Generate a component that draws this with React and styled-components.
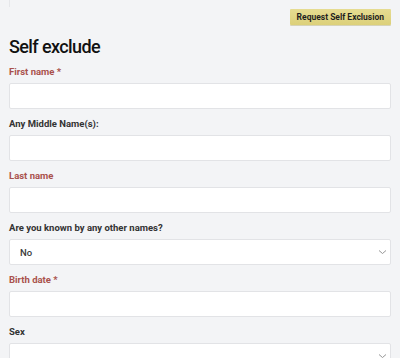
import React, { useState } from 'react';
import styled, { createGlobalStyle } from 'styled-components';

const GlobalStyle = createGlobalStyle`
  html, body {
    margin: 0;
    padding: 0;
    background: #f3f4f6;
  }
  body {
    font-family: Roboto, "Liberation Sans", Arial, sans-serif;
    color: #2b2b2b;
  }
`;

const Page = styled.div`
  padding: 0 9px;
  height: 358px;
  overflow: hidden;
`;

// 위쪽에 잘려서 보이는 패널 테두리 흔적
const PanelEdge = styled.div`
  height: 7px;
  border-left: 1px solid #e6e7ea;
`;

const Toolbar = styled.div`
  display: flex;
  justify-content: flex-end;
  margin-top: 2px;
`;

const ExcludeButton = styled.button`
  height: 16px;
  padding: 0 7px;
  border: none;
  border-radius: 1px;
  background: linear-gradient(#e6dc92, #dcd07a);
  box-shadow: 0 1px 0 rgba(160, 150, 70, 0.35);
  color: #1f1f1f;
  font-family: Roboto, "Liberation Sans", Arial, sans-serif;
  font-size: 8.5px;
  font-weight: 700;
  letter-spacing: 0;
  cursor: pointer;
`;

const Title = styled.h1`
  margin: 11px 0 0;
  font-size: 18px;
  line-height: 22px;
  font-weight: 500;
  color: #111;
  letter-spacing: -0.6px;
`;

const Form = styled.form`
  display: flex;
  flex-direction: column;
  margin-top: -1px;
`;

const Field = styled.div`
  display: flex;
  flex-direction: column;
  margin-top: 9px;
`;

const Label = styled.label`
  font-size: 9.5px;
  line-height: 12px;
  font-weight: 700;
  letter-spacing: 0;
  margin-bottom: 5px;
  color: ${({ required }) => (required ? '#a9514c' : '#333')};
`;

const TextInput = styled.input`
  box-sizing: border-box;
  height: 26px;
  width: 100%;
  border: 1px solid #e2e3e6;
  border-radius: 2px;
  background: #fff;
  padding: 0 10px;
  font-family: inherit;
  font-size: 9.5px;
  outline: none;
`;

const SelectWrap = styled.div`
  position: relative;
  height: 26px;
`;

const Select = styled.select`
  box-sizing: border-box;
  appearance: none;
  height: 26px;
  width: 100%;
  border: 1px solid #e2e3e6;
  border-radius: 2px;
  background: #fff;
  padding: 0 10px;
  font-family: inherit;
  font-size: 9.5px;
  font-weight: 500;
  color: #3a3a3a;
  outline: none;
`;

const Chevron = styled.svg`
  position: absolute;
  right: 4px;
  top: 10px;
  pointer-events: none;
`;

const ChevronIcon = () => (
  <Chevron width="9" height="6" viewBox="0 0 9 6">
    <path d="M1 1.5 L4.5 4.5 L8 1.5" fill="none" stroke="#8a8a8a" strokeWidth="0.9" />
  </Chevron>
);

const fields = [
  { name: 'firstName', label: 'First name *', required: true },
  { name: 'middleName', label: 'Any Middle Name(s):' },
  { name: 'lastName', label: 'Last name', required: true },
  { name: 'otherNames', label: 'Are you known by any other names?', options: ['No', 'Yes'] },
  { name: 'birthDate', label: 'Birth date *', required: true },
  { name: 'sex', label: 'Sex', options: ['', 'Male', 'Female'] },
];

const App = () => {
  const [values, setValues] = useState({ otherNames: 'No', sex: '' });

  const handleChange = (e) => {
    setValues({ ...values, [e.target.name]: e.target.value });
  };

  return (
    <>
      <GlobalStyle />
      <Page>
        <PanelEdge />
        <Toolbar>
          <ExcludeButton type="button">Request Self Exclusion</ExcludeButton>
        </Toolbar>
        <Title>Self exclude</Title>
        <Form onSubmit={(e) => e.preventDefault()}>
          {fields.map((f) => (
            <Field key={f.name}>
              <Label htmlFor={f.name} required={f.required}>{f.label}</Label>
              {f.options ? (
                <SelectWrap>
                  <Select id={f.name} name={f.name} value={values[f.name] || ''} onChange={handleChange}>
                    {f.options.map((o) => (
                      <option key={o} value={o}>{o}</option>
                    ))}
                  </Select>
                  <ChevronIcon />
                </SelectWrap>
              ) : (
                <TextInput id={f.name} name={f.name} value={values[f.name] || ''} onChange={handleChange} />
              )}
            </Field>
          ))}
        </Form>
      </Page>
    </>
  );
};

export default App;
